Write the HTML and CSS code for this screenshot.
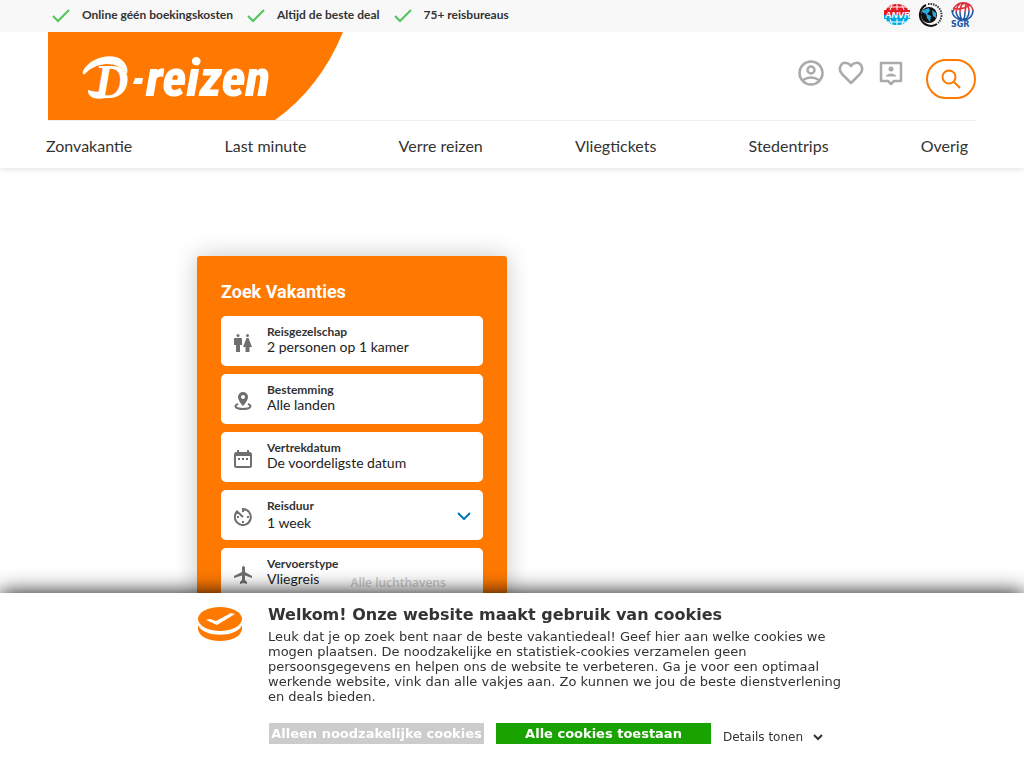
FILE: index.html
```html
<!DOCTYPE html>
<html lang="nl">
<head>
<meta charset="utf-8">
<meta name="viewport" content="width=device-width, initial-scale=1">
<title>D-reizen</title>
<link rel="stylesheet" href="styles.css">
</head>
<body>
<header class="site-header">
  <div class="usp-bar">
    <ul class="usps">
      <li><svg class="check" viewBox="0 0 18 14"><path d="M1 7l5 5L17 1"/></svg>Online géén boekingskosten</li>
      <li><svg class="check" viewBox="0 0 18 14"><path d="M1 7l5 5L17 1"/></svg>Altijd de beste deal</li>
      <li><svg class="check" viewBox="0 0 18 14"><path d="M1 7l5 5L17 1"/></svg>75+ reisbureaus</li>
    </ul>
    <div class="badges">
      <svg width="26" height="24" viewBox="0 0 26 24" role="img" aria-label="ANVR">
        <path d="M2 8C5 0 21 0 24 8z" fill="#e31b23"/><path d="M2 17C5 25 21 25 24 17z" fill="#00a8e1"/>
        <path d="M4 5h18M13 2v6M8 3L6 8M18 3l2 5M4 20h18M13 17v6M6 17l2 5M20 17l-2 5" stroke="#fff" fill="none"/>
        <path d="M0 8h26v5H0z" fill="#e31b23"/><path d="M0 13h26v4H0z" fill="#00a8e1"/>
        <text x="1" y="16" font-size="9" font-weight="700" font-style="italic" fill="#fff">ANVR</text>
      </svg>
      <svg width="26" height="26" viewBox="0 0 26 26" role="img" aria-label="Calamiteitenfonds">
        <path d="M9 3A11 11 0 1 0 20 22" fill="none" stroke="#111" stroke-width="2"/>
        <path d="M11 2C18 1 25 6 24.500 14Q24 18 21 21" fill="none" stroke="#333" stroke-width="2" stroke-dasharray="1.500 1"/>
        <circle cx="12" cy="13" r="8" fill="#111"/>
        <path d="M6 8l6-2 1 3-3 3 4 2-1 6-3-4-1-4-4-2zM15 8l4 3v5l-3-2z" fill="#29a9e0"/>
      </svg>
      <svg width="26" height="26" viewBox="0 0 26 26" role="img" aria-label="SGR">
        <g fill="none" stroke-width="1.500"><path d="M3 10C4 -2 21 -2 23 8M6 10C7 3 10 1 13 1M10 10c0-5 2-8 4-9M15 10c1-4 1-6 0-9M19 9c0-3-1-6-3-8M3 6c5 2 12 0 17-3" stroke="#e0303a"/><path d="M2 8c0 6 5 10 11 10s10-4 10-10M6 10c1 5 3 7 7 8M10 10c0 4 1 7 3 8M15 10c0 4 0 6-2 8M19 9c0 5-2 8-6 9" stroke="#1d56a5"/></g>
        <text class="sgr" x="1" y="25">SGR</text>
      </svg>
    </div>
  </div>
  <div class="brand-bar">
    <a class="brand" href="#" aria-label="D-reizen">
      <svg width="296" height="88" viewBox="0 0 296 88">
        <path d="M0 0H295Q272 56 227 88H0z" fill="#ff7900"/>
        <g fill="#fff">
          <path d="M35 39C40 28 57 22 68 25C77 28 81 36 79 42C75 35 67 32 58 32C49 33 42 36 37 42Q34 43 35 39z"/>
          <path d="M40 58Q48 61 56 59L58 66Q42 69 40 60z"/>
          <text class="logo-d" x="46" y="66">D</text>
          <text class="logo-word" x="98" y="64">reizen</text>
          <path d="M87 46h8l-1 6h-9z"/>
        </g>
      </svg>
    </a>
    <div class="actions">
      <a href="#" aria-label="Account"><svg width="26" height="26" viewBox="0 0 26 26"><circle cx="13" cy="13" r="11.500"/><circle cx="13" cy="10" r="3.500"/><path d="M5 20q8-5 16 0"/></svg></a>
      <a href="#" aria-label="Favorieten"><svg width="26" height="26" viewBox="0 0 26 26"><path d="M13 23L4 14C-1 8 4 2 8 3q3 0 5 3q2-3 5-3c4-1 9 5 4 11z"/></svg></a>
      <a href="#" aria-label="Contact"><svg width="26" height="26" viewBox="0 0 26 26"><path d="M3 3h20v18h-7l-3 3-3-3H3z"/><circle class="solid" cx="13" cy="9" r="2.500"/><path class="solid" d="M8 16.500v-1q5-4 10 0v1z"/></svg></a>
      <button class="search" type="button" aria-label="Zoeken"><svg width="20" height="20" viewBox="0 0 20 20"><circle cx="8" cy="8" r="6.500"/><path d="M13 13l6 6"/></svg></button>
    </div>
  </div>
  <nav class="main-nav">
    <a href="#">Zonvakantie</a><a href="#">Last minute</a><a href="#">Verre reizen</a><a href="#">Vliegtickets</a><a href="#">Stedentrips</a><a href="#">Overig</a>
  </nav>
</header>
<main class="content">
  <form class="search-card">
    <h2>Zoek Vakanties</h2>
    <button class="field" type="button">
      <svg class="icon" viewBox="0 0 18 18"><circle cx="4" cy="1.500" r="1.500"/><path d="M1 4h6q1 0 1 1v6H6v7H2v-7H0V5q0-1 1-1z"/><circle cx="13.500" cy="1.500" r="1.500"/><path d="M12.500 4h2L18 13h-2.500v5h-4v-5H9z"/></svg>
      <span class="field-text"><strong>Reisgezelschap</strong><span>2 personen op 1 kamer</span></span>
    </button>
    <button class="field" type="button">
      <svg class="icon" viewBox="0 0 18 18"><path fill-rule="evenodd" d="M9 0a5 5 0 0 1 5 5c0 4-5 9-5 9S4 9 4 5a5 5 0 0 1 5-5zm0 3a2 2 0 1 0 0 4 2 2 0 0 0 0-4z"/><path class="line" d="M4 12C-1 14 2 17 9 17s10-3 5-5"/></svg>
      <span class="field-text"><strong>Bestemming</strong><span>Alle landen</span></span>
    </button>
    <button class="field" type="button">
      <svg class="icon" viewBox="0 0 18 18"><rect class="line" x="1" y="3" width="16" height="14" rx="1.500"/><path d="M1 3h16v3H1zM3 0h2v3H3zM13 0h2v3h-2zM4 8h2v2H4zM8 8h2v2H8zM12 8h2v2h-2z"/></svg>
      <span class="field-text"><strong>Vertrekdatum</strong><span>De voordeligste datum</span></span>
    </button>
    <div class="field">
      <svg class="icon" viewBox="0 0 18 18"><path class="line" d="M9 4V1a8 8 0 1 1-6 2.500l6 5.500"/><path d="M3 8h2v2H3zM13 8h2v2h-2zM8 13h2v2H8z"/></svg>
      <span class="field-text spaced"><label for="duur">Reisduur</label><select id="duur"><option>1 week</option></select></span>
      <svg class="chevron" viewBox="0 0 14 8"><path d="M1 1l6 6 6-6"/></svg>
    </div>
    <div class="field">
      <svg class="icon" viewBox="0 0 18 18"><path d="M18 12v-2l-7-4V1.500a1.500 1.500 0 0 0-3 0V6l-8 4v2l8-2.500V14l-2 2v2l3.500-1 3.500 1v-2l-2-2V9.500z"/></svg>
      <span class="field-text"><label for="vervoer">Vervoerstype</label><select id="vervoer"><option>Vliegreis</option></select></span>
      <select class="airport" aria-label="Luchthaven" disabled><option>Alle luchthavens</option></select>
    </div>
  </form>
</main>
<section class="cookie-banner" aria-label="Cookies">
  <div class="cookie-inner">
    <svg class="cookie-logo" width="46" height="36" viewBox="0 0 46 36"><path d="M1 19v4C2 31 12 35 23 35s21-4 22-12v-4c-5 13-39 13-44 0z" fill="#ff7900"/><ellipse cx="23" cy="13" rx="22" ry="12" fill="#ff7900"/><path d="M9 14l4-1 6 2L34 7l4 1-18 11z" fill="#fff"/></svg>
    <div class="cookie-copy">
      <h2>Welkom! Onze website maakt gebruik van cookies</h2>
      <p>Leuk dat je op zoek bent naar de beste vakantiedeal! Geef hier aan welke cookies we mogen plaatsen. De noodzakelijke en statistiek-cookies verzamelen geen persoonsgegevens en helpen ons de website te verbeteren. Ga je voor een optimaal werkende website, vink dan alle vakjes aan. Zo kunnen we jou de beste dienstverlening en deals bieden.</p>
      <div class="cookie-actions">
        <button class="decline" type="button">Alleen noodzakelijke cookies</button>
        <button class="accept" type="button">Alle cookies toestaan</button>
        <a class="details" href="#">Details tonen<svg width="10" height="7" viewBox="0 0 10 7"><path d="M1 1l4 4 4-4"/></svg></a>
      </div>
    </div>
  </div>
</section>
</body>
</html>
```
FILE: styles.css
```css
* { box-sizing: border-box; }
body { margin: 0; background: #fff; color: #333; font-family: Lato, sans-serif; }
a { color: inherit; text-decoration: none; }
button, select { font: inherit; color: inherit; }
svg { display: block; flex: none; }

.site-header { background: #fff; box-shadow: 0 2px 6px rgba(0, 0, 0, .1); }
.usp-bar { display: flex; justify-content: space-between; height: 32px; padding: 0 48px; background: #f8f8f8; }
.usps { display: flex; gap: 14px; margin: 0; padding: 0 0 0 4px; list-style: none; font-size: 12px; font-weight: 700; line-height: 30px; }
.usps li { display: flex; align-items: center; gap: 12px; height: 30px; }
.check { width: 18px; height: 14px; margin-top: 2px; fill: none; stroke: #52c45c; stroke-width: 2; }
.badges { display: flex; gap: 7px; padding-top: 2px; font-family: "Liberation Sans", Arial, sans-serif; }
.sgr { fill: #1d56a5; font: 700 8px "DejaVu Sans", sans-serif; }

.brand-bar { display: flex; justify-content: space-between; margin: 0 48px; border-bottom: 1px solid #eee; }
.logo-d { font: italic 700 48px "Liberation Serif", serif; }
.logo-word { font: italic 900 51px "Roboto Condensed", Roboto, sans-serif; }
.actions { display: flex; align-items: flex-start; gap: 14px; padding-top: 28px; }
.actions svg { fill: none; stroke: #aaa; stroke-width: 2.5; stroke-linejoin: round; }
.actions .solid { fill: #aaa; stroke: none; }
.search { display: flex; align-items: center; justify-content: center; width: 50px; height: 40px; margin: -1px 0 0 8px; padding: 0; border: 2px solid #ff7900; border-radius: 20px; background: #fff; }
.actions .search svg { stroke: #ff7900; stroke-width: 2; }
.main-nav { display: flex; justify-content: space-between; padding: 14px 56px 12px 46px; font-size: 16px; line-height: 21px; }

.content { padding: 88px 197px 0; }
.search-card { display: flex; flex-direction: column; gap: 8px; width: 310px; max-width: 100%; padding: 24px; border-radius: 3px; background: #ff7900; box-shadow: 0 0 24px rgba(0, 0, 0, .22); }
.search-card h2 { margin: 0 0 4px; color: #fff; font: 700 18px/24px Roboto, sans-serif; }
.field { display: flex; align-items: center; height: 50px; padding: 0 12px 0 13px; border: 0; border-radius: 5px; background: #fff; text-align: left; }
.icon { width: 18px; height: 18px; margin: 4px 15px 0 0; fill: #6f6f6f; }
.icon .line { fill: none; stroke: #6f6f6f; stroke-width: 2; }
.field-text { display: flex; flex-direction: column; padding-bottom: 2px; font-size: 14px; line-height: 16px; color: #222; }
.field-text.spaced { gap: 2px; padding-bottom: 0; }
.field-text strong, .field-text label { font-size: 12px; font-weight: 700; line-height: 14px; color: #333; }
.field select { appearance: none; padding: 0; border: 0; background: none; }
.chevron { width: 14px; height: 8px; margin: 2px 0 0 auto; fill: none; stroke: #0077c0; stroke-width: 2; }
.field .airport { margin: 20px 0 0 12px; font: 600 12px/16px "Open Sans", sans-serif; color: #ccc; opacity: 1; }

.cookie-banner { position: fixed; right: 0; bottom: 0; left: 0; padding: 12px 180px 23px 197px; background: #fff; box-shadow: 0 0 20px rgba(0, 0, 0, .95); font-family: "DejaVu Sans", sans-serif; }
.cookie-inner { display: flex; gap: 25px; }
.cookie-logo { margin-top: 1px; }
.cookie-copy { flex: 1; }
.cookie-copy h2 { margin: 0 0 4px; font-size: 16px; line-height: 20px; }
.cookie-copy p { margin: 0 0 19px; font-size: 13px; line-height: 15px; }
.cookie-actions { display: flex; align-items: flex-start; gap: 12px; padding-left: 1px; }
.cookie-actions button { width: 215px; height: 21px; padding: 0; border: 0; color: #fff; font-size: 13px; font-weight: 700; line-height: 21px; white-space: nowrap; }
.decline { background: #ccc; }
.accept { background: #18a300; }
.details { display: flex; align-items: center; gap: 10px; padding-top: 6px; font-size: 12px; line-height: 16px; }
.details svg { fill: none; stroke: #333; stroke-width: 2; }
```
